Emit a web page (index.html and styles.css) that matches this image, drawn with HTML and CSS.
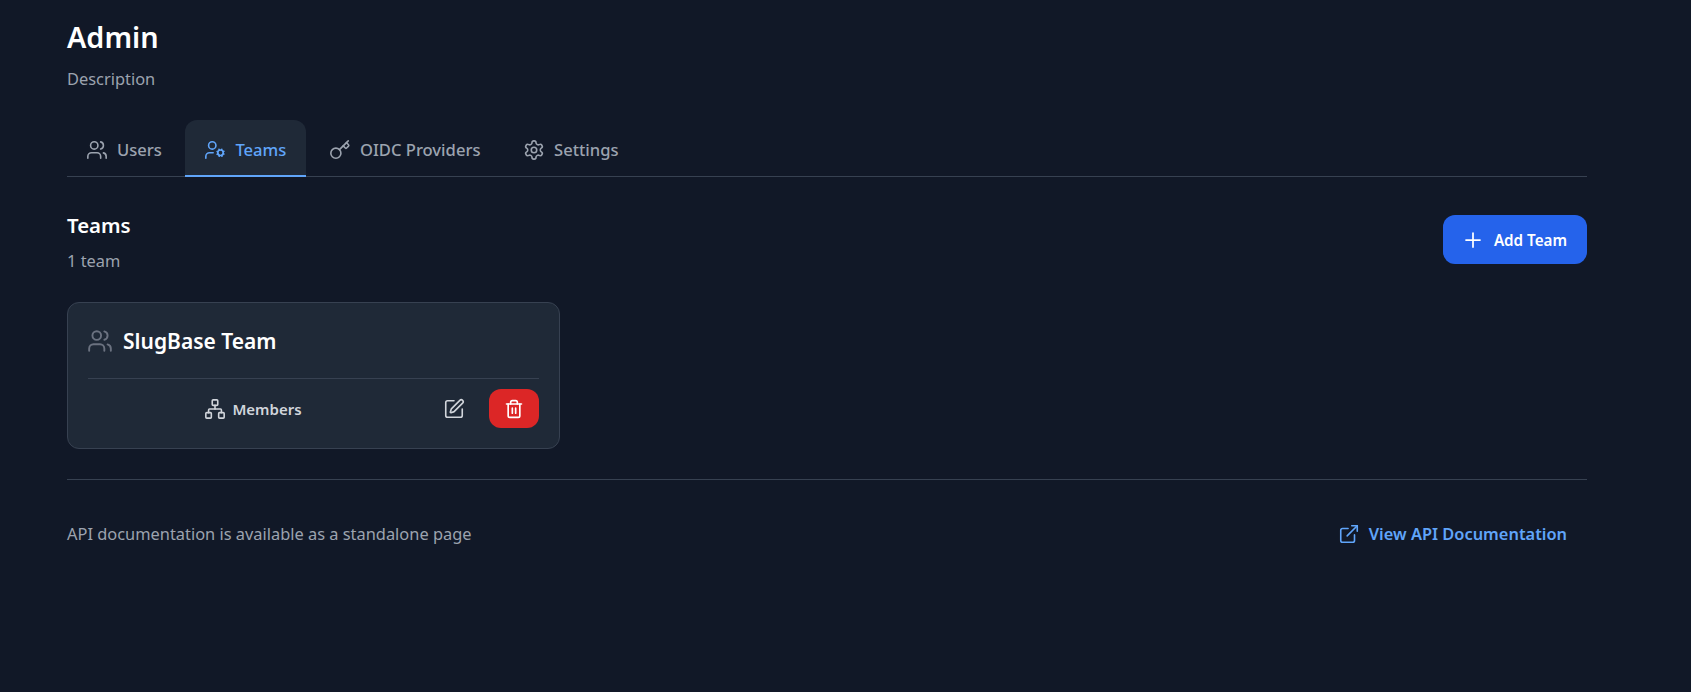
FILE: index.html
```html
<!DOCTYPE html>
<html lang="en">
<head>
<meta charset="UTF-8" />
<meta name="viewport" content="width=device-width, initial-scale=1" />
<title>Admin</title>
<link rel="stylesheet" href="styles.css">
</head>
<body>
  <main class="page">
    <header class="page-head">
      <h1>Admin</h1>
      <p class="muted">Description</p>
    </header>

    <nav class="tabs">
      <a class="tab" href="#">
        <svg class="icon" viewBox="0 0 24 24"><path d="M16 21v-2a4 4 0 0 0-4-4H6a4 4 0 0 0-4 4v2"/><circle cx="9" cy="7" r="4"/><path d="M22 21v-2a4 4 0 0 0-3-3.87"/><path d="M16 3.13a4 4 0 0 1 0 7.75"/></svg>
        Users
      </a>
      <a class="tab active" href="#">
        <svg class="icon" viewBox="0 0 24 24"><circle cx="18" cy="15" r="3"/><circle cx="9" cy="7" r="4"/><path d="M10 15H6a4 4 0 0 0-4 4v2"/><path d="m21.7 16.4-.9-.3M15.2 13.9l-.9-.3M16.6 18.7l.3-.9M19.1 12.2l.3-.9M19.6 18.7l-.4-1M16.8 12.3l-.4-1M14.3 16.6l1-.4M20.7 13.8l1-.4"/></svg>
        Teams
      </a>
      <a class="tab" href="#">
        <svg class="icon" viewBox="0 0 24 24"><path d="m15.5 7.5 2.3 2.3a1 1 0 0 0 1.4 0l2.1-2.1a1 1 0 0 0 0-1.4L19 4"/><path d="m21 2-9.6 9.6"/><circle cx="7.5" cy="15.5" r="5.5"/></svg>
        OIDC Providers
      </a>
      <a class="tab" href="#">
        <svg class="icon" viewBox="0 0 24 24"><path d="M12.22 2h-.44a2 2 0 0 0-2 2v.18a2 2 0 0 1-1 1.73l-.43.25a2 2 0 0 1-2 0l-.15-.08a2 2 0 0 0-2.73.73l-.22.38a2 2 0 0 0 .73 2.73l.15.1a2 2 0 0 1 1 1.72v.51a2 2 0 0 1-1 1.74l-.15.09a2 2 0 0 0-.73 2.73l.22.38a2 2 0 0 0 2.73.73l.15-.08a2 2 0 0 1 2 0l.43.25a2 2 0 0 1 1 1.73V20a2 2 0 0 0 2 2h.44a2 2 0 0 0 2-2v-.18a2 2 0 0 1 1-1.73l.43-.25a2 2 0 0 1 2 0l.15.08a2 2 0 0 0 2.73-.73l.22-.39a2 2 0 0 0-.73-2.73l-.15-.08a2 2 0 0 1-1-1.74v-.5a2 2 0 0 1 1-1.74l.15-.09a2 2 0 0 0 .73-2.73l-.22-.38a2 2 0 0 0-2.73-.73l-.15.08a2 2 0 0 1-2 0l-.43-.25a2 2 0 0 1-1-1.73V4a2 2 0 0 0-2-2z"/><circle cx="12" cy="12" r="3"/></svg>
        Settings
      </a>
    </nav>

    <section class="section-head">
      <div>
        <h2>Teams</h2>
        <p class="muted">1 team</p>
      </div>
      <button class="btn-add">
        <svg class="icon-plus" viewBox="0 0 24 24"><path d="M5 12h14M12 5v14"/></svg>
        Add Team
      </button>
    </section>

    <div class="team-grid">
      <article class="team-card">
        <div class="team-title">
          <svg class="icon-lg" viewBox="0 0 24 24"><path d="M16 21v-2a4 4 0 0 0-4-4H6a4 4 0 0 0-4 4v2"/><circle cx="9" cy="7" r="4"/><path d="M22 21v-2a4 4 0 0 0-3-3.87"/><path d="M16 3.13a4 4 0 0 1 0 7.75"/></svg>
          <h3>SlugBase Team</h3>
        </div>
        <div class="team-actions">
          <button class="btn-members">
            <svg class="icon" viewBox="0 0 24 24"><rect x="16" y="16" width="6" height="6" rx="1"/><rect x="2" y="16" width="6" height="6" rx="1"/><rect x="9" y="2" width="6" height="6" rx="1"/><path d="M5 16v-3a1 1 0 0 1 1-1h12a1 1 0 0 1 1 1v3"/><path d="M12 12V8"/></svg>
            Members
          </button>
          <button class="btn-edit" aria-label="Edit">
            <svg class="icon" viewBox="0 0 24 24"><path d="M12 3H5a2 2 0 0 0-2 2v14a2 2 0 0 0 2 2h14a2 2 0 0 0 2-2v-7"/><path d="M18.375 2.625a1 1 0 0 1 3 3l-9.013 9.014a2 2 0 0 1-.853.505l-2.873.84a.5.5 0 0 1-.62-.62l.84-2.873a2 2 0 0 1 .506-.852z"/></svg>
          </button>
          <button class="btn-delete" aria-label="Delete">
            <svg class="icon-trash" viewBox="0 0 24 24"><path d="M3 6h18"/><path d="M19 6v14a2 2 0 0 1-2 2H7a2 2 0 0 1-2-2V6"/><path d="M8 6V4a2 2 0 0 1 2-2h4a2 2 0 0 1 2 2v2"/><path d="M10 11v6M14 11v6"/></svg>
          </button>
        </div>
      </article>
    </div>

    <footer class="api-note">
      <p class="muted">API documentation is available as a standalone page</p>
      <a class="api-link" href="#">
        <svg class="icon" viewBox="0 0 24 24"><path d="M15 3h6v6"/><path d="M10 14 21 3"/><path d="M18 13v6a2 2 0 0 1-2 2H5a2 2 0 0 1-2-2V8a2 2 0 0 1 2-2h6"/></svg>
        View API Documentation
      </a>
    </footer>
  </main>
</body>
</html>
```
FILE: styles.css
```css
body {
  margin: 0;
  background-color: #111827;
  color: #fff;
  font-family: "Noto Sans", "Open Sans", sans-serif;
}

.page {
  width: 1520px;
  margin-left: 67px;
  padding-top: 17px;
}

h1, h2, h3, p {
  margin: 0;
}

svg {
  fill: none;
  stroke: currentColor;
  stroke-width: 1.75;
  stroke-linecap: round;
  stroke-linejoin: round;
  flex-shrink: 0;
}

.icon {
  width: 22px;
  height: 22px;
}

.icon-plus {
  width: 24px;
  height: 24px;
}

.icon-lg {
  width: 26px;
  height: 26px;
  margin-left: -1px;
}

.icon-trash {
  width: 20px;
  height: 20px;
  stroke-width: 2;
}

.muted {
  color: #9ca3af;
  font-size: 16.4px;
  line-height: 24px;
}

/* Header */
.page-head h1 {
  font-size: 28.8px;
  line-height: 40px;
  font-weight: 600;
}

.page-head .muted {
  margin-top: 10px;
}

/* Tabs */
.tabs {
  display: flex;
  gap: 4px;
  margin-top: 29px;
  border-bottom: 1px solid #374151;
}

.tab {
  display: flex;
  align-items: center;
  gap: 9px;
  height: 57px;
  padding: 4px 19.5px 0 19px;
  margin-bottom: -1px;
  border-radius: 12px 12px 0 0;
  border-bottom: 2px solid transparent;
  box-sizing: border-box;
  color: #9ca3af;
  font-size: 16.6px;
  font-weight: 500;
  text-decoration: none;
}

.tab.active {
  background: #1f2937;
  border-bottom-color: #60a5fa;
  color: #60a5fa;
}

/* Section heading */
.section-head {
  display: flex;
  justify-content: space-between;
  align-items: flex-start;
  margin-top: 34px;
}

.section-head h2 {
  font-size: 20.4px;
  line-height: 28px;
  font-weight: 600;
}

.section-head .muted {
  margin-top: 10px;
}

.btn-add {
  display: flex;
  align-items: center;
  gap: 9px;
  height: 49px;
  margin-top: 4px;
  padding: 0 20px 0 18px;
  border: none;
  border-radius: 12px;
  background: #2563eb;
  color: #fff;
  font: 600 15.2px "Noto Sans", sans-serif;
}

/* Team card */
.team-grid {
  margin-top: 29px;
}

.team-card {
  width: 493px;
  box-sizing: border-box;
  padding: 20px;
  background: #1f2937;
  border: 1px solid #374151;
  border-radius: 12px;
}

.team-title {
  display: flex;
  align-items: center;
  gap: 10px;
  color: #6b7280;
  padding-bottom: 19px;
  border-bottom: 1px solid #374151;
}

.team-title h3 {
  color: #fff;
  font-size: 21px;
  line-height: 36px;
  font-weight: 600;
}

.team-actions {
  display: flex;
  align-items: center;
  gap: 8px;
  margin-top: 10px;
}

.team-actions button {
  display: flex;
  align-items: center;
  justify-content: center;
  height: 39px;
  border: none;
  border-radius: 12px;
  background: none;
  color: #d1d5db;
}

.btn-members {
  flex: 1;
  gap: 6px;
  font: 600 15px "Noto Sans", sans-serif;
}

.team-actions .btn-edit {
  width: 55px;
}

.team-actions .btn-delete {
  width: 50px;
  background: #dc2626;
  color: #fff;
}

/* API footer */
.api-note {
  display: flex;
  justify-content: space-between;
  align-items: center;
  margin-top: 30px;
  padding-top: 29px;
  border-top: 1px solid #374151;
}

.api-link {
  display: flex;
  align-items: center;
  gap: 9px;
  height: 49px;
  padding: 0 20px;
  color: #60a5fa;
  font-size: 16.4px;
  font-weight: 600;
  text-decoration: none;
}
```
